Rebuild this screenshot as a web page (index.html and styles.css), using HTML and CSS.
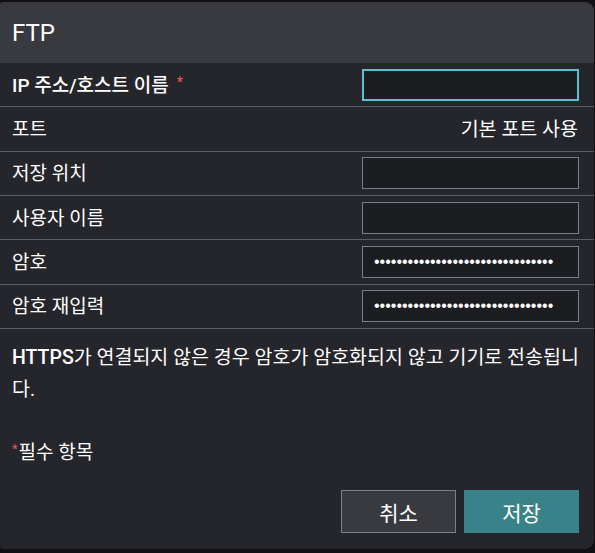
FILE: index.html
```html
<!DOCTYPE html>
<html lang="ko">
<head>
<meta charset="utf-8">
<title>FTP</title>
<link rel="stylesheet" href="styles.css">
</head>
<body>
<div class="dialog">
  <div class="header">FTP</div>
  <div class="rows">
    <div class="row">
      <div class="label strong">IP 주소/호스트 이름<span class="req">*</span></div>
      <div class="input focus"></div>
    </div>
    <div class="row">
      <div class="label">포트</div>
      <div class="value">기본 포트 사용</div>
    </div>
    <div class="row">
      <div class="label">저장 위치</div>
      <div class="input"></div>
    </div>
    <div class="row">
      <div class="label">사용자 이름</div>
      <div class="input"></div>
    </div>
    <div class="row">
      <div class="label">암호</div>
      <div class="input"><span class="dots">••••••••••••••••••••••••••••••••</span></div>
    </div>
    <div class="row">
      <div class="label">암호 재입력</div>
      <div class="input"><span class="dots">••••••••••••••••••••••••••••••••</span></div>
    </div>
  </div>
  <div class="content">
    <p class="note"><b class="latin">HTTPS</b>가 연결되지 않은 경우 암호가 암호화되지 않고 기기로 전송됩니다.</p>
    <p class="required"><span class="req small">*</span>필수 항목</p>
  </div>
  <div class="actions">
    <button class="btn cancel">취소</button>
    <button class="btn save">저장</button>
  </div>
</div>
</body>
</html>
```

FILE: styles.css
```css
html, body {
  margin: 0;
  padding: 0;
  background: #101012;
}
body {
  font-family: Roboto, "Noto Sans CJK KR", sans-serif;
  color: #ffffff;
}
.dialog {
  margin-top: 2px;
  width: 594px;
  height: 547px;
  background: #25262b;
  border-radius: 3px 9px 9px 3px;
  overflow: hidden;
  display: flex;
  flex-direction: column;
}
.header {
  height: 61px;
  flex: none;
  background: #393a40;
  display: flex;
  align-items: center;
  padding-left: 12px;
  font-size: 24px;
}
.rows {
  display: flex;
  flex-direction: column;
}
.row {
  height: 43.33px;
  border-bottom: 1px solid #5c5e67;
  display: flex;
  align-items: center;
  justify-content: space-between;
  padding: 0 15px 0 12px;
  font-size: 19px;
}
.label, .value {
  margin-bottom: 3px;
}
.label.strong {
  font-weight: 500;
}
.req {
  color: #e0575a;
  font-size: 14px;
  position: relative;
  top: -5px;
  margin-left: 8px;
}
.req.small {
  margin-left: 0;
  margin-right: 1px;
  font-size: 13px;
  top: -6px;
}
.value {
  font-size: 19.5px;
  margin-right: 1px;
}
.input {
  width: 217px;
  height: 32px;
  box-sizing: border-box;
  background: #1c1d21;
  border: 1px solid #7a7e8b;
  display: flex;
  align-items: center;
  padding-left: 11px;
}
.input.focus {
  border: 2px solid #5ebfcf;
}
.dots {
  font-family: "Liberation Sans", sans-serif;
  font-size: 16px;
  line-height: 1;
  letter-spacing: 0;
}
.content {
  padding: 13px 12px 0 12px;
  flex: 1;
}
.note {
  margin: 0;
  font-size: 19.5px;
  line-height: 32px;
}
.latin {
  font-weight: 500;
}
.required {
  margin: 31px 0 0 0;
  font-size: 19px;
  line-height: 32px;
}
.actions {
  display: flex;
  justify-content: flex-end;
  gap: 8px;
  padding: 0 15px 16px 0;
}
.btn {
  width: 115px;
  height: 43px;
  box-sizing: border-box;
  font-family: Roboto, "Noto Sans CJK KR", sans-serif;
  font-size: 21px;
  color: #ffffff;
  border: none;
  padding: 0;
}
.btn.cancel {
  background: #393a40;
  border: 1px solid #7c7f8c;
}
.btn.save {
  background: #3a8289;
}
```
